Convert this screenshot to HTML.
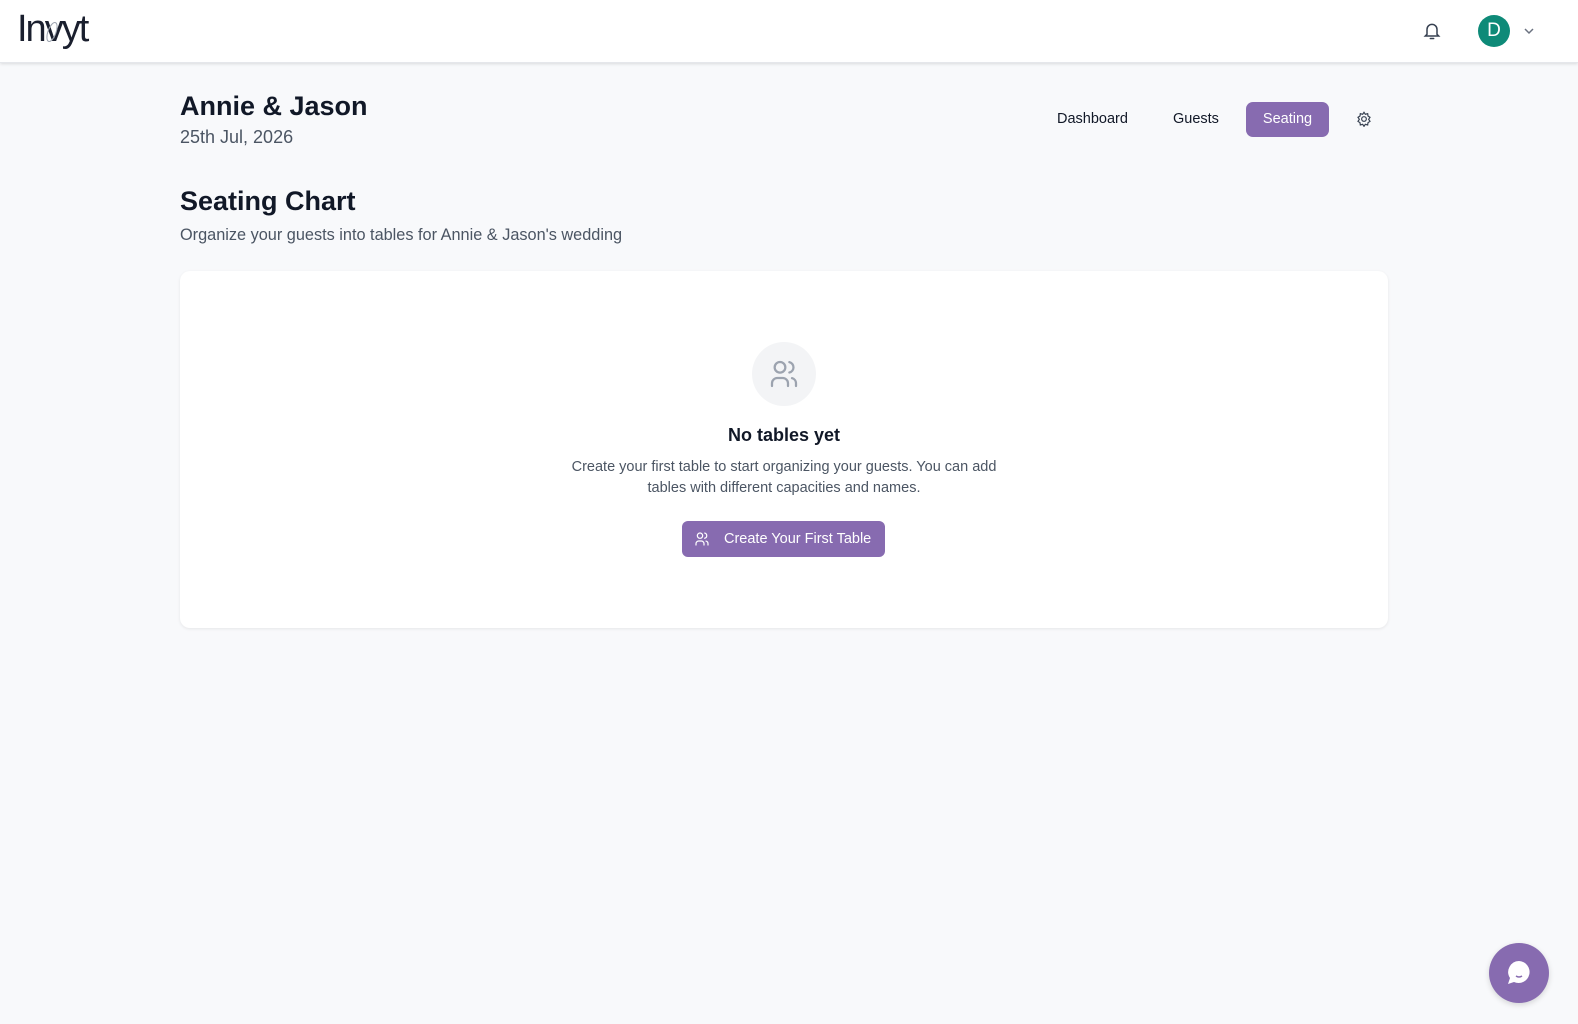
<!DOCTYPE html>
<html><head><meta charset="utf-8"><style>
*{box-sizing:border-box;margin:0;padding:0}
body{width:1578px;height:1024px;background:#f8f9fb;font-family:"Liberation Sans",sans-serif;color:#111827;position:relative;overflow:hidden}
.top{position:absolute;left:0;top:0;width:1578px;height:63px;background:#fff;box-shadow:0 1px 3px rgba(0,0,0,.12);border-bottom:1px solid #e5e7eb}
.logo{position:absolute;left:17px;top:8px;font-size:38px;letter-spacing:-2px;color:#1a1f2e;font-family:"Liberation Sans",sans-serif}
.av{position:absolute;left:1478px;top:15px;width:32px;height:32px;border-radius:50%;background:#0e8a78;color:#fff;font-size:19px;text-align:center;line-height:32px}
h1{position:absolute;left:180px;top:91px;font-size:27px;font-weight:600}
.date{position:absolute;left:180px;top:127px;font-size:18px;color:#4b5563}
.nav{position:absolute;top:102px;height:35px;line-height:35px;font-size:14.5px;color:#111827}
.sel{background:#876bb0;color:#fff;border-radius:7px;width:83px;text-align:center;left:1246px}
h2{position:absolute;left:180px;top:186px;font-size:27px;font-weight:600}
.sub{position:absolute;left:180px;top:226px;font-size:16.3px;color:#4b5563}
.card{position:absolute;left:180px;top:271px;width:1208px;height:357px;background:#fff;border-radius:10px;box-shadow:0 1px 3px rgba(0,0,0,.08)}
.circ{position:absolute;left:752px;top:342px;width:64px;height:64px;border-radius:50%;background:#f3f4f6}
.nt{position:absolute;left:0;width:1568px;top:425px;text-align:center;font-size:18px;font-weight:600}
.ds{position:absolute;left:0;width:1568px;top:457px;text-align:center;font-size:14.5px;line-height:21px;color:#4b5563}
.btn{position:absolute;left:682px;top:521px;width:203px;height:36px;border-radius:6px;background:#876bb0;color:#fff;font-size:14.5px;line-height:36px;padding-left:42px}
.chat{position:absolute;left:1489px;top:943px;width:60px;height:60px;border-radius:50%;background:#876bb0;box-shadow:0 2px 6px rgba(0,0,0,.15)}
</style></head><body>
<div class="top">
<div class="logo">Invyt</div>
<svg style="position:absolute;left:44px;top:20px" width="16" height="28"><ellipse cx="8" cy="12" rx="4" ry="10" transform="rotate(20 8 12)" fill="none" stroke="#9ca3af" stroke-width="1"/></svg>
<svg style="position:absolute;left:1422px;top:21px" width="20" height="20" viewBox="0 0 24 24" fill="none" stroke="#374151" stroke-width="1.8" stroke-linecap="round"><path d="M6 16V10a6 6 0 0 1 12 0v6l2 2H4z"/><path d="M10 21h4"/></svg>
<div class="av">D</div>
<svg style="position:absolute;left:1523px;top:26px" width="12" height="10" viewBox="0 0 12 10" fill="none" stroke="#6b7280" stroke-width="1.5"><path d="M2 3l4 4 4-4"/></svg>
</div>
<h1>Annie &amp; Jason</h1>
<div class="date">25th Jul, 2026</div>
<div class="nav" style="left:1057px">Dashboard</div>
<div class="nav" style="left:1173px">Guests</div>
<div class="nav sel">Seating</div>
<svg style="position:absolute;left:1356px;top:111px" width="16" height="16" viewBox="0 0 24 24" fill="none" stroke="#374151" stroke-width="1.8"><path d="M12 2l2 3 3.5-1 .5 3.5 3 2-2 3 2 3-3 2-.5 3.5-3.5-1-2 3-2-3-3.5 1-.5-3.5-3-2 2-3-2-3 3-2 .5-3.5 3.5 1z"/><circle cx="12" cy="12" r="3.5"/></svg>
<h2>Seating Chart</h2>
<div class="sub">Organize your guests into tables for Annie &amp; Jason's wedding</div>
<div class="card"></div>
<div class="circ"><svg style="position:absolute;left:16px;top:16px" width="32" height="32" viewBox="0 0 24 24" fill="none" stroke="#9ca3af" stroke-width="1.7" stroke-linecap="round"><circle cx="9" cy="7" r="4"/><path d="M3 21v-2a4 4 0 0 1 4-4h4a4 4 0 0 1 4 4v2"/><path d="M16 3.1a4 4 0 0 1 0 7.8"/><path d="M21 21v-2a4 4 0 0 0-3-3.9"/></svg></div>
<div class="nt">No tables yet</div>
<div class="ds">Create your first table to start organizing your guests. You can add<br>tables with different capacities and names.</div>
<div class="btn"><svg style="position:absolute;left:12px;top:10px" width="16" height="16" viewBox="0 0 24 24" fill="none" stroke="#fff" stroke-width="1.8" stroke-linecap="round"><circle cx="9" cy="7" r="4"/><path d="M3 21v-2a4 4 0 0 1 4-4h4a4 4 0 0 1 4 4v2"/><path d="M16 3.1a4 4 0 0 1 0 7.8"/><path d="M21 21v-2a4 4 0 0 0-3-3.9"/></svg>Create Your First Table</div>
<div class="chat"><svg style="position:absolute;left:15px;top:15px" width="30" height="30" viewBox="0 0 30 30"><path d="M15 3a11 11 0 1 1-5 21l-6 2 2-6A11 11 0 0 1 15 3z" fill="#fff"/><path d="M12 18q3 2 6 0" stroke="#876bb0" stroke-width="1.5" fill="none"/></svg></div>
</body></html>
